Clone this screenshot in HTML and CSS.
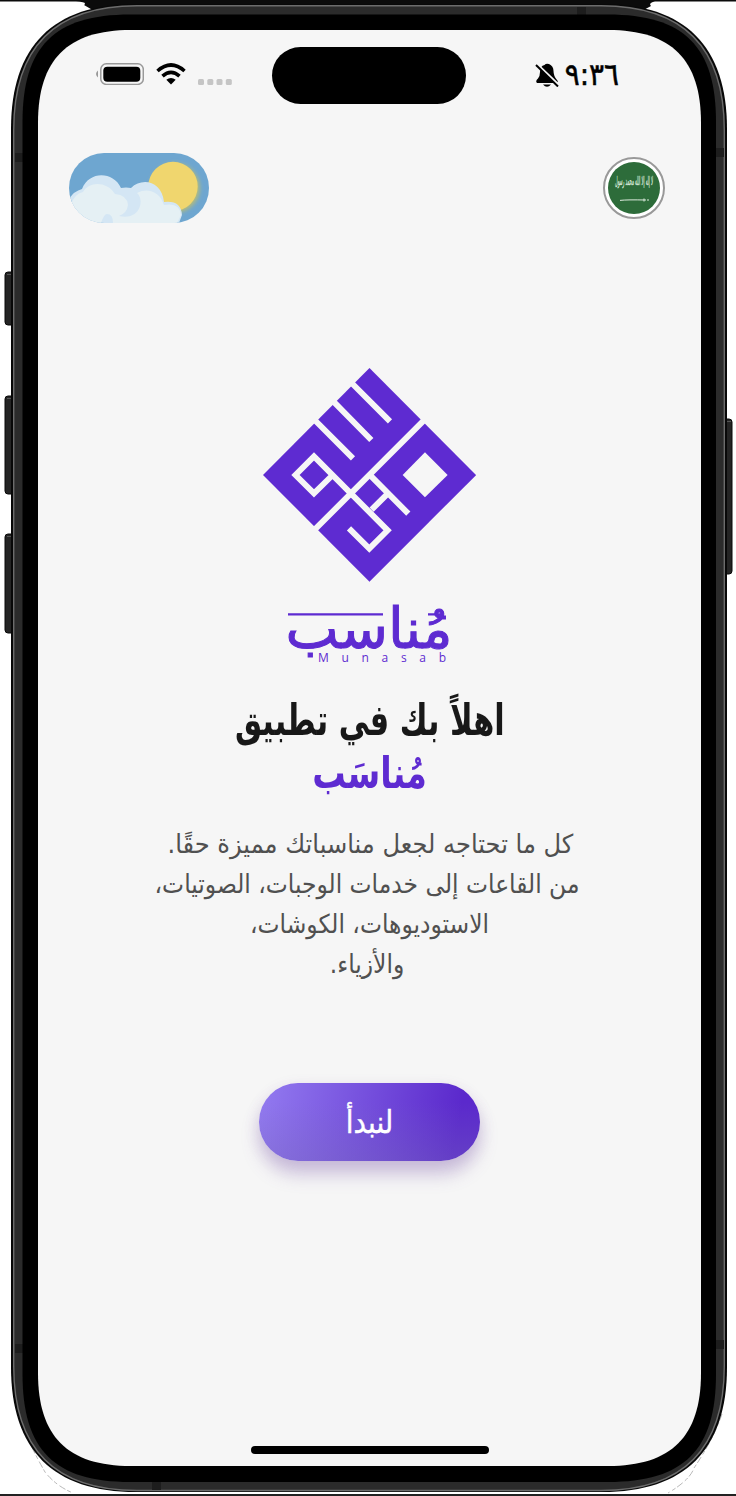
FILE: index.html
```
<!DOCTYPE html>
<html lang="ar" dir="rtl">
<head>
<meta charset="utf-8">
<title>مُناسَب</title>
<link rel="stylesheet" href="styles.css">
</head>
<body>
<div class="phone">
  <svg class="frame" viewBox="0 0 736 1496" aria-hidden="true">
    <path fill="#0b0b0b" d="M0 0H736V1.500H655Q648 3 651 6L640 12H96L84 5Q88 2 76 1.500H0Z"/>
    <path fill="#222" d="M0 1494H736V1496H0Z"/>
    <path fill="none" stroke="#888" stroke-width=".6" stroke-dasharray="7 2 4 3" d="M19 1418Q30 1446 45 1472Q56 1486 73 1493M722 1414Q713 1440 694 1468Q690 1480 668 1493"/>
    <g fill="#242424" stroke="#090909">
      <rect x="5" y="272" width="12" height="53" rx="3"/>
      <rect x="5" y="396" width="12" height="98" rx="3"/>
      <rect x="5" y="534" width="12" height="99" rx="3"/>
      <rect x="720" y="419" width="12" height="155" rx="3"/>
    </g>
    <path stroke="#555" d="M7 274.500h6M7 398.500h6M7 536.500h6M725 421.500h6"/>
    <path fill="#080808" d="M11 129C11 46 53 4 136 4H602C685 4 727 46 727 129V1367C727 1450 685 1492 602 1492H136C53 1492 11 1450 11 1367Z"/>
    <path fill="#2b2b2b" stroke="#6c6c6c" stroke-width="1.400" d="M13.700 130C13.700 47 55 5.700 137 5.700H601C683 5.700 724.300 47 724.300 130V1366C724.300 1449 683 1490.500 601 1490.500H137C55 1490.500 13.700 1449 13.700 1366Z"/>
    <path fill="#1d1d1d" d="M15 153h8v9h-8zM716 148h8v9h-8zM15 1344h8v9h-8zM716 1340h8v9h-8zM577 7h9v8h-9zM152 1482h9v8h-9z"/>
    <path d="M22.500 122C22.500 46.500 54.500 14.500 130 14.500H608C684 14.500 716 46.500 716 122V1374C716 1450 684 1482 608 1482H130C54.500 1482 22.500 1450 22.500 1374Z"/>
    <path fill="#f6f6f6" d="M38 123C38 59.500 67.500 30 131 30H608C671.500 30 701 59.500 701 123V1373C701 1436.500 671.500 1466 608 1466H131C67.500 1466 38 1436.500 38 1373Z"/>
  </svg>

  <main class="screen">
    <header class="status">
      <div class="clock"><span class="time">٩:٣٦</span>
        <svg class="bell" viewBox="0 0 24 24"><path d="M2 20Q0 18 3 15.500Q5 13 5 9Q5 3 9.500 2Q11 0 14 1Q18.500 3 18.500 8Q18.500 13 22 17Q24 19 21 20Z"/><path d="M8 21.500h8q-4 4.500-8 0"/><path d="M2 1.500L25 23.500" stroke="#f6f6f6" stroke-width="3"/><path d="M1 2L23 23.500" stroke="#000" stroke-width="2"/></svg>
      </div>
      <div class="island"></div>
      <div class="signals">
        <svg class="dots" viewBox="0 0 34 6" fill="#c5c5c5"><rect width="6" height="6" rx="1.500"/><rect x="9.300" width="6" height="6" rx="1.500"/><rect x="18.500" width="6" height="6" rx="1.500"/><rect x="27.800" width="6" height="6" rx="1.500"/></svg>
        <svg class="wifi" viewBox="0 0 30 22"><path fill="none" stroke="#000" stroke-width="3.600" d="M1.500 8Q15-4 28.500 8M6.500 13.200Q15 5.500 23.500 13.200"/><path d="M10.300 16.800Q15 13 19.700 16.800L15 21.500Z"/></svg>
        <svg class="battery" viewBox="0 0 49 22"><rect x="5.800" y=".8" width="42.500" height="20.600" rx="5.500" fill="none" stroke="#999" stroke-width="1.500"/><rect x="8.300" y="3.700" width="37" height="15" rx="4"/><path fill="#999" d="M3 7.500v7q-4-3.500 0-7"/></svg>
      </div>
    </header>

    <div class="controls">
      <button class="language" aria-label="العربية">
        <svg viewBox="0 0 52 52"><circle cx="26" cy="26" r="26" fill="#2d6c3a"/><text class="creed" x="26" y="23" textLength="38" lengthAdjust="spacingAndGlyphs">لا إله إلا الله محمد رسول</text><path d="M12 38.400q7-.8 26-.4M36 36.500v3M40 37v2" stroke="#dceadd" stroke-width="1" fill="none"/></svg>
      </button>
      <button class="weather" aria-label="الوضع النهاري">
        <svg viewBox="0 0 140 70">
          <defs><clipPath id="pill"><rect width="140" height="70" rx="35"/></clipPath><filter id="glow"><feGaussianBlur stdDeviation="2"/></filter></defs>
          <g clip-path="url(#pill)">
            <path fill="#6ea6d0" d="M0 0H140V70H0Z"/>
            <circle cx="106" cy="35" r="24.500" fill="#b9bd75" filter="url(#glow)"/>
            <circle cx="104" cy="33.500" r="24.700" fill="#f0d66e"/>
            <path fill="#d4e6f4" d="M0 46Q5 38 13 36C20 18 44 18 52 35Q57 34 62 35C73 24 93 28 95 49Q112 47 113 62L110 70H0Z"/>
            <path fill="#e5f0f4" d="M2 52Q5 41 14 39C20 28 38 28 46 41Q58 42 59 52Q58 60 50 63C71 68 76 47 68 40C79 34 91 39 95 52Q111 49 112 62L108 70H44Q44 61 38 61Q35 61 32 70H0Z"/>
          </g>
        </svg>
      </button>
    </div>

    <svg class="logo" viewBox="24 24 640 641">
      <path fill="#5e2bd1" d="M343.500 24L663.500 345L343.500 665L24 345Z"/>
      <path fill="#f6f6f6" d="M510 277L578 345L510 412L443 345Z"/>
      <g fill="none" stroke="#f6f6f6" stroke-width="17.700">
        <path d="M284 63L405 184M229 118L349 240M173 174L294 295M515 173L173 515"/>
        <path d="M282 505L343 566L398 511L177 289.500L121.500 345L177 400L233 345M343 343L460 461M399 400L350 449"/>
      </g>
    </svg>

    <svg class="wordmark" viewBox="0 0 170 66">
      <text class="word" x="84" y="47" textLength="167" lengthAdjust="spacingAndGlyphs">مُناسب</text>
      <path fill="none" stroke="#5e2bd1" stroke-width="2.200" d="M3 13.300H98M143 13.300H156"/>
      <text class="latin" x="33" y="61" textLength="128">Munasab</text>
    </svg>

    <h1 class="title"><span class="welcome">اهلاً بك في تطبيق</span><span class="brand">مُناسَب</span></h1>

    <div class="intro">
      <p class="lead">كل ما تحتاجه لجعل مناسباتك مميزة حقًا.</p>
      <p class="services">من القاعات إلى خدمات الوجبات، الصوتيات،</p>
      <p>الاستوديوهات، الكوشات،</p>
      <p class="services">والأزياء.</p>
    </div>

    <button class="start">لنبدأ</button>
    <div class="home"></div>
  </main>
</div>
</body>
</html>
```
FILE: styles.css
```
* { box-sizing: border-box; }
body { margin: 0; background: #fff; font-family: "DejaVu Sans Condensed", "DejaVu Sans", sans-serif; }
button { border: 0; padding: 0; font: inherit; background: none; }
svg { display: block; }
.phone { position: relative; width: 736px; height: 1496px; padding: 30px 35px 30px 38px; overflow: hidden; }
.frame { position: absolute; inset: 0; width: 736px; height: 1496px; }
.screen { position: relative; height: 1436px; display: flex; flex-direction: column; align-items: center; }
.status { width: 100%; height: 104px; padding: 17px 82px 0 57px; display: flex; align-items: flex-start; }
.clock { display: flex; gap: 5px; align-items: center; width: 84px; height: 54px; }
.time { width: 55px; font-size: 31px; line-height: 52px; white-space: nowrap; -webkit-text-stroke: .5px #000; }
.bell { width: 24px; height: 24px; flex: none; margin-top: 2px; }
.island { width: 194px; height: 57px; border-radius: 29px; background: #000; margin-right: 69px; }
.signals { display: flex; height: 54px; align-items: center; gap: 12px; margin-right: auto; }
.dots { width: 34px; height: 6px; margin-top: 15px; }
.wifi { width: 30px; height: 22px; }
.battery { width: 49px; height: 22px; }
.controls { width: 100%; height: 120px; padding: 19px 36px 0 31px; display: flex; justify-content: space-between; align-items: flex-start; }
.language { width: 62px; height: 62px; margin-top: 4px; border: 2px solid #999; border-radius: 50%; background: #fff; padding: 3px; }
.language svg { overflow: visible; }
.creed { font-size: 12px; fill: #dceadd; stroke: #dceadd; stroke-width: .3px; text-anchor: middle; }
.weather { width: 140px; height: 70px; }
.logo { width: 213.300px; height: 213.700px; margin-top: 114px; }
.wordmark { width: 170px; height: 66px; margin-top: 19px; overflow: visible; }
.word { font-size: 56px; fill: #5e2bd1; stroke: #5e2bd1; stroke-width: 1px; text-anchor: middle; }
.latin { font: 12px "Open Sans", sans-serif; fill: #5e2bd1; direction: ltr; }
.title { margin: 27px 0 0; height: 108px; font-size: 43px; line-height: 53px; font-weight: 700; color: #181818; display: flex; flex-direction: column; align-items: center; white-space: nowrap; }
.welcome { transform: scaleX(.785); }
.brand { color: #5e2bd1; transform: scaleX(.86); }
.intro { margin-top: 22px; height: 160px; text-align: center; color: #505050; font-size: 26px; line-height: 40px; white-space: nowrap; }
.intro p { margin: 0; }
.lead { transform: translateX(1px) scaleX(1.033); }
.services { transform: translateX(-2.500px); }
.start { width: 221px; height: 78px; margin-top: 99px; border-radius: 39px; color: #fff; font-size: 31px; line-height: 76px; -webkit-text-stroke: .4px #fff; background: linear-gradient(to top, #786cb955, transparent 75%), linear-gradient(100deg, #937bf0, #5b29cc 88%); box-shadow: 0 14px 18px #6d46a044, 0 5px 16px #6d46a022; }
.home { width: 238px; height: 8px; border-radius: 4px; background: #000; margin: auto 0 12px; }
```
